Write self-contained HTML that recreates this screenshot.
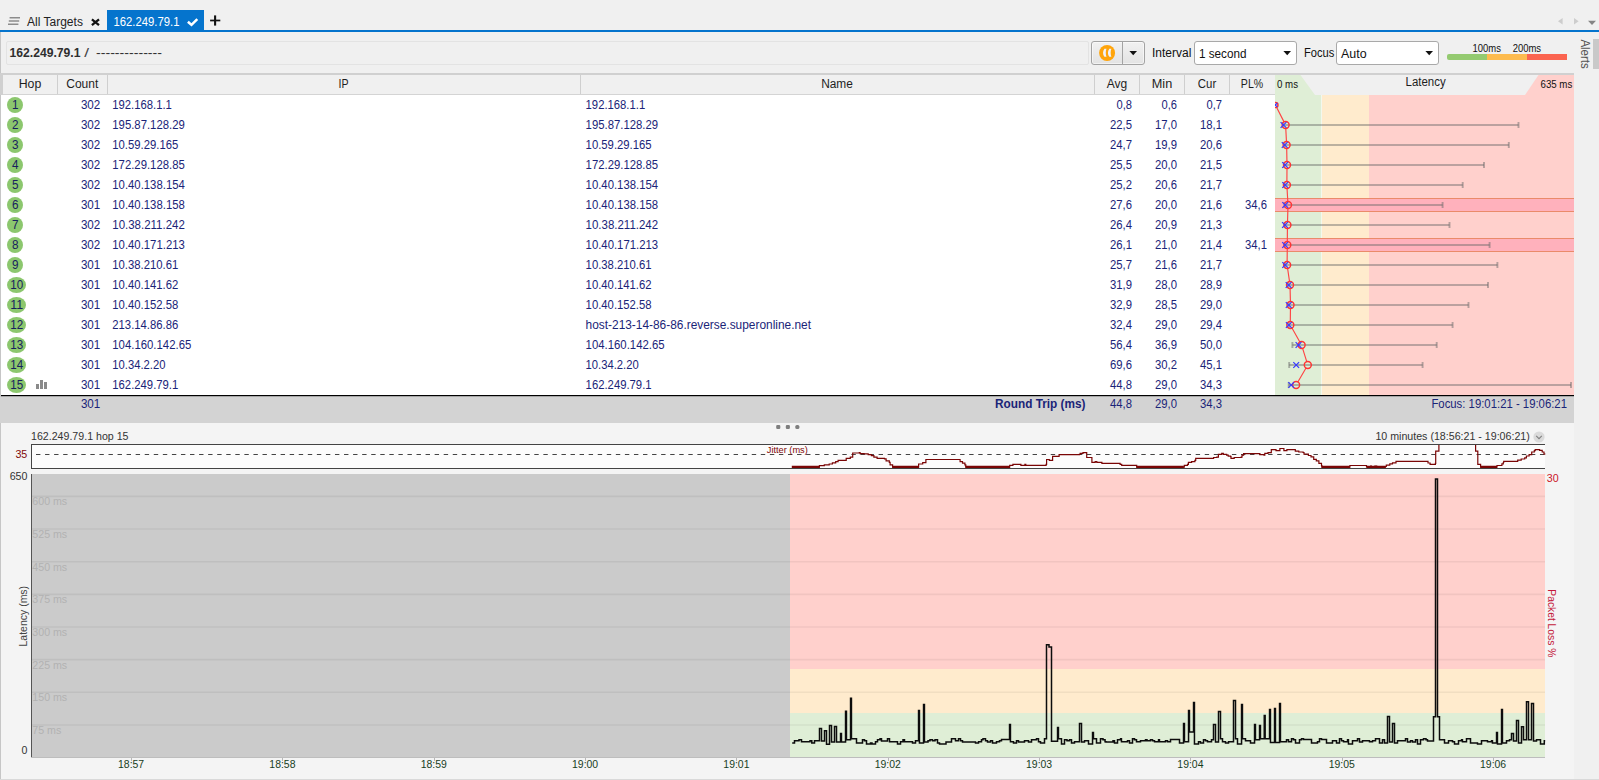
<!DOCTYPE html><html><head><meta charset="utf-8"><title>PingPlotter</title><style>

html,body{margin:0;padding:0;}
body{width:1599px;height:780px;overflow:hidden;background:#f0f0f0;font-family:"Liberation Sans", sans-serif;font-size:12px;color:#222;position:relative;}
.a{position:absolute;}
svg text{font-family:"Liberation Sans", sans-serif;}

</style></head><body>
<div class="a" style="left:0;top:30px;width:1599px;height:2px;background:#0574cd"></div>
<div class="a" style="left:107px;top:10px;width:97px;height:21px;background:#0574cd"></div>
<svg class="a" style="left:7px;top:16px" width="14" height="10"><path d="M2.6 1.8h10.4M1.8 5h10.4M1 8.2h10.4" stroke="#8c8c8c" stroke-width="1.5" fill="none"/></svg>
<svg class="a" style="left:91px;top:18px" width="9" height="9"><path d="M0.9 1.4L8 7.1M8 1.4L0.9 7.1" stroke="#111" stroke-width="2.3" fill="none"/></svg>
<svg class="a" style="left:186px;top:17px" width="13" height="10"><path d="M1.9 4.7L5.5 7.9L11.3 2.1" stroke="#fff" stroke-width="2.5" fill="none"/></svg>
<svg class="a" style="left:209px;top:15px" width="12" height="11"><path d="M6.1 0.4v10.2" stroke="#111" stroke-width="2.1" fill="none"/><path d="M1.1 5.5h10.2" stroke="#111" stroke-width="1.7" fill="none"/></svg>
<svg class="a" style="left:1556px;top:16px" width="43" height="11"><path d="M6.6 2v6.6l-4.6-3.3z" fill="#cdcdcd"/><path d="M18 2v6.6l4.6-3.3z" fill="#cdcdcd"/><path d="M32 4.8h8l-4 4.2z" fill="#858585"/></svg>
<div class="a" style="left:0;top:32px;width:1px;height:748px;background:#c6c6c6"></div>
<div class="a" style="left:0;top:779px;width:1599px;height:1px;background:#d9d9d9"></div>
<div class="a" style="left:6px;top:41px;width:1081px;height:22px;border:1px solid #e3e3e3;border-radius:2px"></div>
<div class="a" style="left:1091px;top:41px;width:52px;height:22px;border:1px solid #a3a3a3;border-radius:3px;background:linear-gradient(#f1f1f1,#e3e3e3);box-shadow:inset 0 0 0 1px rgba(255,255,255,.55)"></div>
<div class="a" style="left:1122px;top:42px;width:1px;height:22px;background:#a3a3a3"></div>
<svg class="a" style="left:1098px;top:44px" width="18" height="18"><circle cx="9.1" cy="9" r="8" fill="#ffa40a"/><path d="M8.5 4.7C7.5 6.5 7.5 11 8.5 12.8L6.4 12.8C4.6 10.6 4.6 6.9 6.4 4.7z" fill="#f1f2fa"/><path d="M13.4 4.7C12.4 6.5 12.4 11 13.4 12.8L11.3 12.8C9.5 10.6 9.5 6.9 11.3 4.7z" fill="#f1f2fa"/></svg>
<svg class="a" style="left:1129px;top:51px" width="9" height="5"><path d="M0.4 0h7.6l-3.8 4.2z" fill="#111"/></svg>
<div class="a" style="left:1194px;top:41px;width:101px;height:22px;border:1px solid #a9a9a9;border-radius:3px;background:#fff"></div>
<svg class="a" style="left:1283px;top:51px" width="9" height="5"><path d="M0.4 0h7.6l-3.8 4.2z" fill="#111"/></svg>
<div class="a" style="left:1336px;top:41px;width:101px;height:22px;border:1px solid #a9a9a9;border-radius:3px;background:#fff"></div>
<svg class="a" style="left:1425px;top:51px" width="9" height="5"><path d="M0.4 0h7.6l-3.8 4.2z" fill="#111"/></svg>
<div class="a" style="left:1447px;top:54px;width:40px;height:6px;background:#94ca70;border-radius:2px 0 0 2px"></div>
<div class="a" style="left:1487px;top:54px;width:40px;height:6px;background:#fdbb4f"></div>
<div class="a" style="left:1527px;top:54px;width:40px;height:6px;background:#fb6450"></div>
<div class="a" style="left:1593px;top:39px;width:6px;height:30px;background:#c9c9c9"></div>
<div class="a" style="left:0px;top:73px;width:1574px;height:2px;background:#d0d0d0"></div>
<div class="a" style="left:0px;top:75px;width:3px;height:20px;background:#d0d0d0"></div>
<div class="a" style="left:3px;top:75px;width:1272px;height:19px;background:#f0f0f0;border-bottom:1px solid #d4d4d4"></div>
<div class="a" style="left:57px;top:75px;width:1px;height:19px;background:#cfcfcf"></div>
<div class="a" style="left:107px;top:75px;width:1px;height:19px;background:#cfcfcf"></div>
<div class="a" style="left:580px;top:75px;width:1px;height:19px;background:#cfcfcf"></div>
<div class="a" style="left:1094px;top:75px;width:1px;height:19px;background:#cfcfcf"></div>
<div class="a" style="left:1139px;top:75px;width:1px;height:19px;background:#cfcfcf"></div>
<div class="a" style="left:1184px;top:75px;width:1px;height:19px;background:#cfcfcf"></div>
<div class="a" style="left:1229px;top:75px;width:1px;height:19px;background:#cfcfcf"></div>
<div class="a" style="left:1px;top:95px;width:1274px;height:300px;background:#fff"></div>
<div class="a" style="left:1275px;top:75px;width:46px;height:320px;background:#dfeed6"></div>
<div class="a" style="left:1321px;top:75px;width:1px;height:320px;background:#f2f8ee"></div>
<div class="a" style="left:1322px;top:75px;width:47px;height:320px;background:#ffebcd"></div>
<div class="a" style="left:1369px;top:75px;width:205px;height:320px;background:#ffd0cc"></div>
<svg class="a" style="left:1275px;top:75px" width="299" height="20"><path d="M25.5 0L263.5 0L250 20L40 20z" fill="#f0f0f0"/></svg>
<div class="a" style="left:1275px;top:198px;width:299px;height:12px;background:#ffb1bc;border-top:1px solid #ea8a6a;border-bottom:1px solid #ea8a6a"></div>
<div class="a" style="left:1275px;top:238px;width:299px;height:12px;background:#ffb1bc;border-top:1px solid #ea8a6a;border-bottom:1px solid #ea8a6a"></div>
<div class="a" style="left:7px;top:97px;width:16px;height:16px;border-radius:50%;background:#8cc76e"></div>
<div class="a" style="left:7px;top:117px;width:16px;height:16px;border-radius:50%;background:#8cc76e"></div>
<div class="a" style="left:7px;top:137px;width:16px;height:16px;border-radius:50%;background:#8cc76e"></div>
<div class="a" style="left:7px;top:157px;width:16px;height:16px;border-radius:50%;background:#8cc76e"></div>
<div class="a" style="left:7px;top:177px;width:16px;height:16px;border-radius:50%;background:#8cc76e"></div>
<div class="a" style="left:7px;top:197px;width:16px;height:16px;border-radius:50%;background:#8cc76e"></div>
<div class="a" style="left:7px;top:217px;width:16px;height:16px;border-radius:50%;background:#8cc76e"></div>
<div class="a" style="left:7px;top:237px;width:16px;height:16px;border-radius:50%;background:#8cc76e"></div>
<div class="a" style="left:7px;top:257px;width:16px;height:16px;border-radius:50%;background:#8cc76e"></div>
<div class="a" style="left:7px;top:277px;width:19px;height:16px;border-radius:50%;background:#8cc76e"></div>
<div class="a" style="left:7px;top:297px;width:19px;height:16px;border-radius:50%;background:#8cc76e"></div>
<div class="a" style="left:7px;top:317px;width:19px;height:16px;border-radius:50%;background:#8cc76e"></div>
<div class="a" style="left:7px;top:337px;width:19px;height:16px;border-radius:50%;background:#8cc76e"></div>
<div class="a" style="left:7px;top:357px;width:19px;height:16px;border-radius:50%;background:#8cc76e"></div>
<div class="a" style="left:7px;top:377px;width:19px;height:16px;border-radius:50%;background:#8cc76e"></div>
<svg class="a" style="left:35px;top:378px" width="13" height="12"><path d="M1 6h3v5h-3zM5 2h3v9h-3zM9 4h3v7h-3z" fill="#8a8a8a"/></svg>
<svg class="a" style="left:1275px;top:95px" width="299" height="300"><path d="M8.0 30 H243.5" stroke="rgba(105,105,105,0.45)" stroke-width="2" fill="none"/><path d="M243.5 27.1 v5.8 M8.0 27.1 v5.8" stroke="rgba(105,105,105,0.5)" stroke-width="1.9" fill="none"/><path d="M9.4 50 H233.8" stroke="rgba(105,105,105,0.45)" stroke-width="2" fill="none"/><path d="M233.8 47.1 v5.8 M9.4 47.1 v5.8" stroke="rgba(105,105,105,0.5)" stroke-width="1.9" fill="none"/><path d="M9.4 70 H209.0" stroke="rgba(105,105,105,0.45)" stroke-width="2" fill="none"/><path d="M209.0 67.1 v5.8 M9.4 67.1 v5.8" stroke="rgba(105,105,105,0.5)" stroke-width="1.9" fill="none"/><path d="M9.7 90 H187.7" stroke="rgba(105,105,105,0.45)" stroke-width="2" fill="none"/><path d="M187.7 87.1 v5.8 M9.7 87.1 v5.8" stroke="rgba(105,105,105,0.5)" stroke-width="1.9" fill="none"/><path d="M9.4 110 H167.6" stroke="rgba(105,105,105,0.45)" stroke-width="2" fill="none"/><path d="M167.6 107.1 v5.8 M9.4 107.1 v5.8" stroke="rgba(105,105,105,0.5)" stroke-width="1.9" fill="none"/><path d="M9.8 130 H174.5" stroke="rgba(105,105,105,0.45)" stroke-width="2" fill="none"/><path d="M174.5 127.1 v5.8 M9.8 127.1 v5.8" stroke="rgba(105,105,105,0.5)" stroke-width="1.9" fill="none"/><path d="M9.9 150 H214.6" stroke="rgba(105,105,105,0.45)" stroke-width="2" fill="none"/><path d="M214.6 147.1 v5.8 M9.9 147.1 v5.8" stroke="rgba(105,105,105,0.5)" stroke-width="1.9" fill="none"/><path d="M10.2 170 H222.4" stroke="rgba(105,105,105,0.45)" stroke-width="2" fill="none"/><path d="M222.4 167.1 v5.8 M10.2 167.1 v5.8" stroke="rgba(105,105,105,0.5)" stroke-width="1.9" fill="none"/><path d="M13.2 190 H213.0" stroke="rgba(105,105,105,0.45)" stroke-width="2" fill="none"/><path d="M213.0 187.1 v5.8 M13.2 187.1 v5.8" stroke="rgba(105,105,105,0.5)" stroke-width="1.9" fill="none"/><path d="M13.4 210 H193.5" stroke="rgba(105,105,105,0.45)" stroke-width="2" fill="none"/><path d="M193.5 207.1 v5.8 M13.4 207.1 v5.8" stroke="rgba(105,105,105,0.5)" stroke-width="1.9" fill="none"/><path d="M13.7 230 H177.6" stroke="rgba(105,105,105,0.45)" stroke-width="2" fill="none"/><path d="M177.6 227.1 v5.8 M13.7 227.1 v5.8" stroke="rgba(105,105,105,0.5)" stroke-width="1.9" fill="none"/><path d="M17.4 250 H161.7" stroke="rgba(105,105,105,0.45)" stroke-width="2" fill="none"/><path d="M161.7 247.1 v5.8 M17.4 247.1 v5.8" stroke="rgba(105,105,105,0.5)" stroke-width="1.9" fill="none"/><path d="M14.2 270 H147.6" stroke="rgba(105,105,105,0.45)" stroke-width="2" fill="none"/><path d="M147.6 267.1 v5.8 M14.2 267.1 v5.8" stroke="rgba(105,105,105,0.5)" stroke-width="1.9" fill="none"/><path d="M13.7 290 H296.0" stroke="rgba(105,105,105,0.45)" stroke-width="2" fill="none"/><path d="M296.0 287.1 v5.8 M13.7 287.1 v5.8" stroke="rgba(105,105,105,0.5)" stroke-width="1.9" fill="none"/><path d="M1.56 12.32L9.00 26.88M10.78 33.50L11.45 46.50M11.70 53.50L11.94 66.50M11.98 73.50L11.89 86.50M12.06 93.49L12.80 106.51M12.90 113.50L12.53 126.50M12.41 133.50L12.32 146.50M12.26 153.50L12.14 166.50M12.61 173.46L14.52 186.54M15.10 193.50L15.41 206.50M15.45 213.50L15.30 226.50M16.98 233.05L24.84 246.95M27.60 253.34L31.74 266.66M31.01 273.02L22.86 286.98" fill="none" stroke="#ff4444" stroke-width="1.15"/><circle cx="0.4" cy="10" r="2.6" fill="none" stroke="#ff3434" stroke-width="1.45"/><path d="M-1.8 7.9l4.2 4.2M-1.8 12.1l4.2 -4.2" stroke="#3a3aff" stroke-width="1.25" fill="none"/><circle cx="10.6" cy="30" r="3.5" fill="none" stroke="#ff3434" stroke-width="1.45"/><path d="M5.6 27.1l5.8 5.8M5.6 32.9l5.8 -5.8" stroke="#3a3aff" stroke-width="1.25" fill="none"/><circle cx="11.6" cy="50" r="3.5" fill="none" stroke="#ff3434" stroke-width="1.45"/><path d="M6.8 47.1l5.8 5.8M6.8 52.9l5.8 -5.8" stroke="#3a3aff" stroke-width="1.25" fill="none"/><circle cx="12.0" cy="70" r="3.5" fill="none" stroke="#ff3434" stroke-width="1.45"/><path d="M7.2 67.1l5.8 5.8M7.2 72.9l5.8 -5.8" stroke="#3a3aff" stroke-width="1.25" fill="none"/><circle cx="11.9" cy="90" r="3.5" fill="none" stroke="#ff3434" stroke-width="1.45"/><path d="M7.3 87.1l5.8 5.8M7.3 92.9l5.8 -5.8" stroke="#3a3aff" stroke-width="1.25" fill="none"/><circle cx="13.0" cy="110" r="3.5" fill="none" stroke="#ff3434" stroke-width="1.45"/><path d="M7.3 107.1l5.8 5.8M7.3 112.9l5.8 -5.8" stroke="#3a3aff" stroke-width="1.25" fill="none"/><circle cx="12.4" cy="130" r="3.5" fill="none" stroke="#ff3434" stroke-width="1.45"/><path d="M7.1 127.1l5.8 5.8M7.1 132.9l5.8 -5.8" stroke="#3a3aff" stroke-width="1.25" fill="none"/><circle cx="12.3" cy="150" r="3.5" fill="none" stroke="#ff3434" stroke-width="1.45"/><path d="M7.2 147.1l5.8 5.8M7.2 152.9l5.8 -5.8" stroke="#3a3aff" stroke-width="1.25" fill="none"/><circle cx="12.1" cy="170" r="3.5" fill="none" stroke="#ff3434" stroke-width="1.45"/><path d="M7.3 167.1l5.8 5.8M7.3 172.9l5.8 -5.8" stroke="#3a3aff" stroke-width="1.25" fill="none"/><circle cx="15.0" cy="190" r="3.5" fill="none" stroke="#ff3434" stroke-width="1.45"/><path d="M10.7 187.1l5.8 5.8M10.7 192.9l5.8 -5.8" stroke="#3a3aff" stroke-width="1.25" fill="none"/><circle cx="15.5" cy="210" r="3.5" fill="none" stroke="#ff3434" stroke-width="1.45"/><path d="M10.8 207.1l5.8 5.8M10.8 212.9l5.8 -5.8" stroke="#3a3aff" stroke-width="1.25" fill="none"/><circle cx="15.3" cy="230" r="3.5" fill="none" stroke="#ff3434" stroke-width="1.45"/><path d="M10.9 227.1l5.8 5.8M10.9 232.9l5.8 -5.8" stroke="#3a3aff" stroke-width="1.25" fill="none"/><circle cx="26.6" cy="250" r="3.5" fill="none" stroke="#ff3434" stroke-width="1.45"/><path d="M20.6 247.1l5.8 5.8M20.6 252.9l5.8 -5.8" stroke="#3a3aff" stroke-width="1.25" fill="none"/><circle cx="32.8" cy="270" r="3.5" fill="none" stroke="#ff3434" stroke-width="1.45"/><path d="M18.3 267.1l5.8 5.8M18.3 272.9l5.8 -5.8" stroke="#3a3aff" stroke-width="1.25" fill="none"/><circle cx="21.1" cy="290" r="3.5" fill="none" stroke="#ff3434" stroke-width="1.45"/><path d="M13.3 287.1l5.8 5.8M13.3 292.9l5.8 -5.8" stroke="#3a3aff" stroke-width="1.25" fill="none"/></svg>
<div class="a" style="left:1px;top:395px;width:1573px;height:1px;background:#000"></div>
<div class="a" style="left:1px;top:396px;width:1573px;height:1px;background:#a6a6a6"></div>
<div class="a" style="left:0px;top:397px;width:1574px;height:26px;background:#d3d3d3"></div>
<div class="a" style="left:1px;top:423px;width:1573px;height:356px;background:#f4f4f4"></div>
<svg class="a" style="left:775px;top:424px" width="26" height="6"><rect x="1.2" y="0.9" width="4.1" height="4.1" rx="1.2" fill="#7e7e7e"/><rect x="10.8" y="0.9" width="4.1" height="4.1" rx="1.2" fill="#7e7e7e"/><rect x="20.3" y="0.9" width="4.1" height="4.1" rx="1.6" fill="#7e7e7e"/></svg>
<svg class="a" style="left:1533px;top:431px" width="12" height="12"><circle cx="6" cy="6" r="5.6" fill="#dadada"/><path d="M3.2 4.8L6 7.6L8.8 4.8" stroke="#808080" stroke-width="1.1" fill="none"/></svg>
<div class="a" style="left:31px;top:444px;width:1513px;height:23px;background:#fcfcfc;border-top:1px solid #444;border-bottom:1px solid #444;border-left:1px solid #444"></div>
<div class="a" style="left:32px;top:474px;width:758px;height:283px;background:#cbcbcb"></div>
<div class="a" style="left:790px;top:474px;width:755px;height:195px;background:#ffd0cc"></div>
<div class="a" style="left:790px;top:669px;width:755px;height:44px;background:#ffebcd"></div>
<div class="a" style="left:790px;top:713px;width:755px;height:44px;background:#dfeed6"></div>
<div class="a" style="left:31px;top:474px;width:1px;height:284px;background:#555"></div>
<div class="a" style="left:31px;top:757px;width:1514px;height:1px;background:#bdbdbd"></div>
<svg class="a" style="left:32px;top:723px" width="1513" height="4"><path d="M0 1.95H1513" stroke="rgba(0,0,0,0.055)" stroke-width="1.6" fill="none"/></svg>
<svg class="a" style="left:32px;top:690px" width="1513" height="4"><path d="M0 2.29H1513" stroke="rgba(0,0,0,0.055)" stroke-width="1.6" fill="none"/></svg>
<svg class="a" style="left:32px;top:658px" width="1513" height="4"><path d="M0 1.64H1513" stroke="rgba(0,0,0,0.055)" stroke-width="1.6" fill="none"/></svg>
<svg class="a" style="left:32px;top:625px" width="1513" height="4"><path d="M0 1.98H1513" stroke="rgba(0,0,0,0.055)" stroke-width="1.6" fill="none"/></svg>
<svg class="a" style="left:32px;top:592px" width="1513" height="4"><path d="M0 2.33H1513" stroke="rgba(0,0,0,0.055)" stroke-width="1.6" fill="none"/></svg>
<svg class="a" style="left:32px;top:560px" width="1513" height="4"><path d="M0 1.68H1513" stroke="rgba(0,0,0,0.055)" stroke-width="1.6" fill="none"/></svg>
<svg class="a" style="left:32px;top:527px" width="1513" height="4"><path d="M0 2.02H1513" stroke="rgba(0,0,0,0.055)" stroke-width="1.6" fill="none"/></svg>
<svg class="a" style="left:32px;top:494px" width="1513" height="4"><path d="M0 2.37H1513" stroke="rgba(0,0,0,0.055)" stroke-width="1.6" fill="none"/></svg>
<div class="a" style="left:131px;top:758px;width:1px;height:3px;background:#b8b8b8"></div>
<div class="a" style="left:282px;top:758px;width:1px;height:3px;background:#b8b8b8"></div>
<div class="a" style="left:434px;top:758px;width:1px;height:3px;background:#b8b8b8"></div>
<div class="a" style="left:585px;top:758px;width:1px;height:3px;background:#b8b8b8"></div>
<div class="a" style="left:736px;top:758px;width:1px;height:3px;background:#b8b8b8"></div>
<div class="a" style="left:888px;top:758px;width:1px;height:3px;background:#b8b8b8"></div>
<div class="a" style="left:1039px;top:758px;width:1px;height:3px;background:#b8b8b8"></div>
<div class="a" style="left:1190px;top:758px;width:1px;height:3px;background:#b8b8b8"></div>
<div class="a" style="left:1342px;top:758px;width:1px;height:3px;background:#b8b8b8"></div>
<div class="a" style="left:1493px;top:758px;width:1px;height:3px;background:#b8b8b8"></div>
<svg class="a" style="left:0;top:445px" width="1599" height="23" viewBox="0 445 1599 23"><path d="M36 454.5H1545" stroke="#444" stroke-width="1.1" stroke-dasharray="4.4 4.66" fill="none"/><path d="M792.1 467.2H819.4V467.2H819.4V465.6H824.3V464.8H829.2V464.0H832.4V462.9H835.7V461.7H838.1V460.4H845.4V460.4H846.2V458.3H850.3V457.2H852.7V453.0H859.3V452.6H860.1V453.6H864.1V453.9H868.2V454.6H871.4V455.6H873.9V457.2H877.1V458.3H884.5V458.8H886.1V460.8H889.3V462.4H890.1V464.8H892.6V467.2H918.6V467.2H918.6V464.0H922.7V462.7H925.9V459.5H957.6V459.5H960.1V461.6H962.5V463.2H964.9V464.8H965.8V467.2H1009.7V467.2H1009.7V465.3H1012.9V464.3H1016.0V464.3H1020.1V464.3H1020.9V465.3H1024.1V465.3H1024.9V464.3H1025.8V465.3H1044.5V465.3H1046.1V464.3H1046.6V459.5H1048.5V459.5H1049.3V460.4H1052.1V460.4H1052.6V456.4H1057.5V456.4H1059.1V454.6H1079.4V454.3H1080.2V453.4H1082.7V453.4H1083.0V452.6H1086.2V452.6H1086.7V457.5H1091.6V457.5H1091.9V462.4H1094.9V462.4H1095.2V461.6H1096.5V461.6H1096.8V462.4H1101.4V462.4H1101.9V463.4H1119.3V463.4H1120.1V464.3H1121.7V465.3H1136.3V465.3H1136.7V467.2H1183.5V467.2H1184.3V465.3H1187.5V464.3H1188.4V462.4H1191.6V461.6H1194.9V460.4H1195.7V458.3H1212.7V458.3H1213.6V457.5H1216.8V457.2H1218.4V454.3H1221.7V453.4H1223.3V454.3H1226.6V455.1H1228.2V456.2H1230.6V456.7H1231.0V458.3H1233.9V458.3H1234.2V457.5H1241.2V457.2H1242.0V455.1H1243.6V453.6H1258.3V453.6H1259.9V454.7H1264.0V455.1H1264.8V453.4H1268.0V452.6H1271.3V449.7H1276.0V449.7H1276.0V450.6H1279.5V450.6H1279.9V448.5H1283.0V448.5H1283.9V450.6H1286.5V450.6H1286.9V449.6H1293.5V449.6H1295.3V451.1H1298.8V452.0H1303.1V452.5H1304.0V454.1H1308.4V455.5H1311.0V456.9H1313.7V459.4H1316.3V460.8H1318.9V463.4H1321.5V465.7H1321.9V467.2H1349.6V467.2H1349.9V465.5H1366.2V465.5H1366.5V466.9H1370.6V466.0H1371.4V466.9H1374.9V466.0H1376.7V466.9H1385.5V466.5H1386.3V465.1H1389.8V463.9H1392.5V462.9H1396.0V461.3H1427.5V461.3H1428.0V463.0H1430.1V464.3H1432.7V464.3H1435.4V463.4H1435.7V451.1H1438.5V451.1H1438.9V443.3H1475.3V443.3H1475.6V451.1H1477.4V451.1H1477.8V464.3H1480.0V464.3H1480.6V467.2H1496.7V467.2H1497.0V465.5H1501.0V465.5H1501.9V463.9H1503.3V462.5H1503.7V461.3H1515.9V461.3H1517.7V460.2H1521.2V459.0H1524.7V457.8H1526.4V456.0H1529.1V454.6H1531.7V452.0H1534.3V450.6H1535.2V449.6H1539.6V450.3H1542.2V452.0H1544.0V454.1H1544.8V454.6" stroke="#7a0505" stroke-width="1.2" fill="none"/><path d="M791.8 466.9H819.7M892.3 466.9H918.9M965.5 466.9H1010.0M1136.4 466.9H1183.8M1321.6 466.9H1349.9M1480.3 466.9H1497.0M1366.5 466.9H1385.8" stroke="#7a0505" stroke-width="2.3" fill="none"/></svg><svg class="a" style="left:0;top:474px" width="1599" height="284" viewBox="0 474 1599 284"><path d="M792.20 743.00H794.50V740.70H799.00V739.70H801.50V741.70H810.00V740.70H811.80V743.00H814.50V740.80H819.50V728.50H821.50V741.00H824.50V730.70H826.50V744.30H829.50V725.50H831.50V742.00H834.50V726.50H836.50V742.00H840.55V733.50H841.45V742.00H845.55V711.20H846.45V739.70H850.55V698.30H851.45V738.70H856.50V743.00H862.50V739.70H864.50V740.70H866.50V744.00H870.50V743.00H872.00V744.00H875.50V741.80H877.50V739.70H880.00V738.70H881.50V741.00H887.50V738.70H889.50V741.80H897.50V744.00H900.50V741.80H903.00V739.70H904.50V741.80H912.50V743.00H915.50V740.80H918.55V710.50H919.45V743.00H923.55V704.50H924.45V742.00H928.00V740.80H930.00V739.70H932.50V740.80H935.00V739.70H937.50V743.00H939.50V744.00H946.00V742.00H951.50V738.70H955.50V740.80H958.50V738.70H960.50V740.80H962.50V742.00H975.50V743.00H978.50V741.80H981.50V739.70H983.00V738.70H985.50V740.80H987.50V742.00H990.50V740.80H992.50V743.00H996.50V741.80H999.50V740.80H1001.50V739.50H1009.55V724.50H1010.45V741.80H1013.50V743.00H1016.50V740.80H1018.50V742.00H1024.50V740.80H1028.50V742.00H1031.50V739.70H1036.50V738.70H1038.50V741.80H1040.50V743.00H1044.50V738.70H1046.50V644.80H1049.00V647.00H1051.50V741.20H1057.55V727.50H1058.45V738.70H1061.50V744.00H1064.50V739.70H1067.00V740.80H1069.50V739.70H1071.50V743.00H1074.50V741.80H1079.50V723.50H1081.50V742.00H1084.50V740.80H1088.50V744.00H1092.55V732.50H1093.45V738.70H1096.50V743.00H1100.50V738.70H1103.00V739.70H1105.05V741.80H1105.95V742.00H1113.00V740.80H1114.50V743.00H1117.50V739.70H1120.55V738.70H1121.45V741.80H1127.50V740.80H1129.50V743.00H1132.50V738.70H1134.50V739.70H1136.50V741.80H1140.50V740.80H1145.50V739.70H1147.00V740.80H1150.50V739.70H1152.50V740.80H1154.50V741.80H1158.55V739.70H1159.45V741.80H1165.50V740.80H1167.50V741.80H1170.50V739.50H1179.50V743.00H1183.55V723.50H1184.45V741.80H1188.55V710.50H1189.45V732.00H1193.55V702.50H1194.45V744.00H1198.50V741.80H1200.50V743.00H1203.50V739.70H1205.50V740.80H1207.50V741.80H1211.50V739.70H1213.50V724.50H1215.50V742.00H1218.50V711.50H1220.50V738.70H1222.50V741.80H1225.50V743.00H1228.50V741.80H1233.50V700.50H1235.50V738.70H1237.50V744.00H1241.55V704.50H1242.45V738.70H1245.50V740.80H1250.50V743.00H1254.55V724.50H1255.45V739.70H1259.55V725.50H1260.45V738.70H1264.25V715.50H1265.15V738.70H1266.05V738.70H1269.55V709.50H1270.45V742.50H1274.55V708.50H1275.45V742.50H1279.55V703.50H1280.45V741.80H1286.50V739.70H1288.50V741.80H1291.50V738.70H1293.50V739.70H1295.50V743.00H1299.50V739.70H1301.50V738.70H1303.50V739.50H1311.50V743.00H1317.50V741.80H1319.50V738.70H1321.50V739.50H1326.50V743.00H1332.50V740.80H1336.50V743.00H1339.50V738.70H1341.50V740.80H1343.50V741.80H1347.55V739.70H1348.45V744.00H1352.50V740.80H1357.50V738.70H1359.50V742.00H1362.50V740.80H1369.50V741.80H1372.50V740.80H1375.50V738.70H1379.50V743.00H1382.50V739.70H1384.50V743.00H1387.50V716.50H1389.50V742.00H1392.50V723.50H1394.50V743.00H1397.50V740.80H1405.50V738.70H1407.50V742.00H1410.50V740.80H1412.50V742.00H1415.50V739.70H1417.50V744.00H1420.50V739.70H1423.50V738.70H1426.00V739.70H1427.50V741.00H1433.50V716.80H1435.50V479.00H1437.50V716.80H1439.50V739.70H1444.50V743.00H1448.50V740.80H1452.50V741.80H1454.50V744.00H1458.50V740.80H1461.55V739.70H1462.45V741.80H1466.50V738.70H1470.50V743.00H1477.50V744.00H1481.50V740.80H1487.50V741.80H1491.55V740.80H1492.45V743.00H1496.55V732.50H1497.45V744.00H1501.55V709.50H1502.45V743.00H1506.50V740.80H1509.50V739.70H1511.50V733.50H1513.50V741.00H1516.50V720.50H1518.50V743.00H1521.50V726.80H1523.50V739.70H1526.50V701.80H1528.50V739.70H1531.50V703.50H1533.50V741.00H1536.50V739.70H1540.50V744.00H1544.30V740.80H1545.20" stroke="#0c0c0c" stroke-width="1.5" fill="none" stroke-linejoin="miter"/></svg>
<svg class="a" style="left:0;top:0;pointer-events:none" width="1599" height="780"><text x="27.0" y="25.6" font-size="12" fill="#222" text-anchor="start" textLength="55.9" lengthAdjust="spacingAndGlyphs">All Targets</text><text x="113.5" y="25.6" font-size="12" fill="#fff" text-anchor="start" textLength="66.0" lengthAdjust="spacingAndGlyphs">162.249.79.1</text><text x="9.5" y="56.6" font-size="12" fill="#2e2e2e" text-anchor="start" font-weight="bold" textLength="71.0" lengthAdjust="spacingAndGlyphs">162.249.79.1</text><text x="84.2" y="56.6" font-size="12" fill="#444" text-anchor="start" textLength="4.8" lengthAdjust="spacingAndGlyphs">/</text><text x="96.0" y="56.6" font-size="12" fill="#333" text-anchor="start" textLength="66.0" lengthAdjust="spacingAndGlyphs">--------------</text><text x="1152.0" y="57.0" font-size="12" fill="#111" text-anchor="start" textLength="39.3" lengthAdjust="spacingAndGlyphs">Interval</text><text x="1199.0" y="57.8" font-size="12" fill="#111" text-anchor="start" textLength="47.5" lengthAdjust="spacingAndGlyphs">1 second</text><text x="1304.0" y="57.0" font-size="12" fill="#111" text-anchor="start" textLength="30.3" lengthAdjust="spacingAndGlyphs">Focus</text><text x="1341.0" y="57.8" font-size="12" fill="#111" text-anchor="start" textLength="25.6" lengthAdjust="spacingAndGlyphs">Auto</text><text x="1472.5" y="51.8" font-size="10.4" fill="#111" text-anchor="start" textLength="28.4" lengthAdjust="spacingAndGlyphs">100ms</text><text x="1512.7" y="51.8" font-size="10.4" fill="#111" text-anchor="start" textLength="28.4" lengthAdjust="spacingAndGlyphs">200ms</text><text transform="translate(1580.6,39.4) rotate(90)" font-size="12" fill="#555" textLength="29.4" lengthAdjust="spacingAndGlyphs">Alerts</text><text x="30.0" y="87.6" font-size="12" fill="#1e1e1e" text-anchor="middle" textLength="22.6" lengthAdjust="spacingAndGlyphs">Hop</text><text x="82.3" y="87.6" font-size="12" fill="#1e1e1e" text-anchor="middle" textLength="32.1" lengthAdjust="spacingAndGlyphs">Count</text><text x="343.5" y="87.6" font-size="12" fill="#1e1e1e" text-anchor="middle" textLength="10.0" lengthAdjust="spacingAndGlyphs">IP</text><text x="837.0" y="87.6" font-size="12" fill="#1e1e1e" text-anchor="middle" textLength="31.7" lengthAdjust="spacingAndGlyphs">Name</text><text x="1117.0" y="87.6" font-size="12" fill="#1e1e1e" text-anchor="middle" textLength="20.5" lengthAdjust="spacingAndGlyphs">Avg</text><text x="1162.0" y="87.6" font-size="12" fill="#1e1e1e" text-anchor="middle" textLength="20.5" lengthAdjust="spacingAndGlyphs">Min</text><text x="1207.0" y="87.6" font-size="12" fill="#1e1e1e" text-anchor="middle" textLength="18.4" lengthAdjust="spacingAndGlyphs">Cur</text><text x="1252.0" y="87.6" font-size="12" fill="#1e1e1e" text-anchor="middle" textLength="22.3" lengthAdjust="spacingAndGlyphs">PL%</text><text x="1277.0" y="87.6" font-size="10" fill="#111" text-anchor="start" textLength="21.0" lengthAdjust="spacingAndGlyphs">0 ms</text><text x="1405.5" y="86.4" font-size="12" fill="#1e1e1e" text-anchor="start" textLength="40.2" lengthAdjust="spacingAndGlyphs">Latency</text><text x="1572.3" y="87.7" font-size="10" fill="#111" text-anchor="end" textLength="31.8" lengthAdjust="spacingAndGlyphs">635 ms</text><text x="15.2" y="109.2" font-size="12" fill="#17205e" text-anchor="middle" textLength="6.5" lengthAdjust="spacingAndGlyphs">1</text><text x="100.3" y="109.1" font-size="12" fill="#1a2478" text-anchor="end" textLength="19.4" lengthAdjust="spacingAndGlyphs">302</text><text x="112.3" y="109.1" font-size="12" fill="#1a2478" text-anchor="start" textLength="59.6" lengthAdjust="spacingAndGlyphs">192.168.1.1</text><text x="585.6" y="109.1" font-size="12" fill="#1a2478" text-anchor="start" textLength="59.6" lengthAdjust="spacingAndGlyphs">192.168.1.1</text><text x="1132.0" y="109.1" font-size="12" fill="#1a2478" text-anchor="end" textLength="15.5" lengthAdjust="spacingAndGlyphs">0,8</text><text x="1177.0" y="109.1" font-size="12" fill="#1a2478" text-anchor="end" textLength="15.5" lengthAdjust="spacingAndGlyphs">0,6</text><text x="1222.0" y="109.1" font-size="12" fill="#1a2478" text-anchor="end" textLength="15.5" lengthAdjust="spacingAndGlyphs">0,7</text><text x="15.2" y="129.2" font-size="12" fill="#17205e" text-anchor="middle" textLength="6.5" lengthAdjust="spacingAndGlyphs">2</text><text x="100.3" y="129.1" font-size="12" fill="#1a2478" text-anchor="end" textLength="19.4" lengthAdjust="spacingAndGlyphs">302</text><text x="112.3" y="129.1" font-size="12" fill="#1a2478" text-anchor="start" textLength="72.5" lengthAdjust="spacingAndGlyphs">195.87.128.29</text><text x="585.6" y="129.1" font-size="12" fill="#1a2478" text-anchor="start" textLength="72.5" lengthAdjust="spacingAndGlyphs">195.87.128.29</text><text x="1132.0" y="129.1" font-size="12" fill="#1a2478" text-anchor="end" textLength="22.0" lengthAdjust="spacingAndGlyphs">22,5</text><text x="1177.0" y="129.1" font-size="12" fill="#1a2478" text-anchor="end" textLength="22.0" lengthAdjust="spacingAndGlyphs">17,0</text><text x="1222.0" y="129.1" font-size="12" fill="#1a2478" text-anchor="end" textLength="22.0" lengthAdjust="spacingAndGlyphs">18,1</text><text x="15.2" y="149.2" font-size="12" fill="#17205e" text-anchor="middle" textLength="6.5" lengthAdjust="spacingAndGlyphs">3</text><text x="100.3" y="149.1" font-size="12" fill="#1a2478" text-anchor="end" textLength="19.4" lengthAdjust="spacingAndGlyphs">302</text><text x="112.3" y="149.1" font-size="12" fill="#1a2478" text-anchor="start" textLength="66.0" lengthAdjust="spacingAndGlyphs">10.59.29.165</text><text x="585.6" y="149.1" font-size="12" fill="#1a2478" text-anchor="start" textLength="66.0" lengthAdjust="spacingAndGlyphs">10.59.29.165</text><text x="1132.0" y="149.1" font-size="12" fill="#1a2478" text-anchor="end" textLength="22.0" lengthAdjust="spacingAndGlyphs">24,7</text><text x="1177.0" y="149.1" font-size="12" fill="#1a2478" text-anchor="end" textLength="22.0" lengthAdjust="spacingAndGlyphs">19,9</text><text x="1222.0" y="149.1" font-size="12" fill="#1a2478" text-anchor="end" textLength="22.0" lengthAdjust="spacingAndGlyphs">20,6</text><text x="15.2" y="169.2" font-size="12" fill="#17205e" text-anchor="middle" textLength="6.5" lengthAdjust="spacingAndGlyphs">4</text><text x="100.3" y="169.1" font-size="12" fill="#1a2478" text-anchor="end" textLength="19.4" lengthAdjust="spacingAndGlyphs">302</text><text x="112.3" y="169.1" font-size="12" fill="#1a2478" text-anchor="start" textLength="72.5" lengthAdjust="spacingAndGlyphs">172.29.128.85</text><text x="585.6" y="169.1" font-size="12" fill="#1a2478" text-anchor="start" textLength="72.5" lengthAdjust="spacingAndGlyphs">172.29.128.85</text><text x="1132.0" y="169.1" font-size="12" fill="#1a2478" text-anchor="end" textLength="22.0" lengthAdjust="spacingAndGlyphs">25,5</text><text x="1177.0" y="169.1" font-size="12" fill="#1a2478" text-anchor="end" textLength="22.0" lengthAdjust="spacingAndGlyphs">20,0</text><text x="1222.0" y="169.1" font-size="12" fill="#1a2478" text-anchor="end" textLength="22.0" lengthAdjust="spacingAndGlyphs">21,5</text><text x="15.2" y="189.2" font-size="12" fill="#17205e" text-anchor="middle" textLength="6.5" lengthAdjust="spacingAndGlyphs">5</text><text x="100.3" y="189.1" font-size="12" fill="#1a2478" text-anchor="end" textLength="19.4" lengthAdjust="spacingAndGlyphs">302</text><text x="112.3" y="189.1" font-size="12" fill="#1a2478" text-anchor="start" textLength="72.5" lengthAdjust="spacingAndGlyphs">10.40.138.154</text><text x="585.6" y="189.1" font-size="12" fill="#1a2478" text-anchor="start" textLength="72.5" lengthAdjust="spacingAndGlyphs">10.40.138.154</text><text x="1132.0" y="189.1" font-size="12" fill="#1a2478" text-anchor="end" textLength="22.0" lengthAdjust="spacingAndGlyphs">25,2</text><text x="1177.0" y="189.1" font-size="12" fill="#1a2478" text-anchor="end" textLength="22.0" lengthAdjust="spacingAndGlyphs">20,6</text><text x="1222.0" y="189.1" font-size="12" fill="#1a2478" text-anchor="end" textLength="22.0" lengthAdjust="spacingAndGlyphs">21,7</text><text x="15.2" y="209.2" font-size="12" fill="#17205e" text-anchor="middle" textLength="6.5" lengthAdjust="spacingAndGlyphs">6</text><text x="100.3" y="209.1" font-size="12" fill="#1a2478" text-anchor="end" textLength="19.4" lengthAdjust="spacingAndGlyphs">301</text><text x="112.3" y="209.1" font-size="12" fill="#1a2478" text-anchor="start" textLength="72.5" lengthAdjust="spacingAndGlyphs">10.40.138.158</text><text x="585.6" y="209.1" font-size="12" fill="#1a2478" text-anchor="start" textLength="72.5" lengthAdjust="spacingAndGlyphs">10.40.138.158</text><text x="1132.0" y="209.1" font-size="12" fill="#1a2478" text-anchor="end" textLength="22.0" lengthAdjust="spacingAndGlyphs">27,6</text><text x="1177.0" y="209.1" font-size="12" fill="#1a2478" text-anchor="end" textLength="22.0" lengthAdjust="spacingAndGlyphs">20,0</text><text x="1222.0" y="209.1" font-size="12" fill="#1a2478" text-anchor="end" textLength="22.0" lengthAdjust="spacingAndGlyphs">21,6</text><text x="1267.0" y="209.1" font-size="12" fill="#1a2478" text-anchor="end" textLength="22.0" lengthAdjust="spacingAndGlyphs">34,6</text><text x="15.2" y="229.2" font-size="12" fill="#17205e" text-anchor="middle" textLength="6.5" lengthAdjust="spacingAndGlyphs">7</text><text x="100.3" y="229.1" font-size="12" fill="#1a2478" text-anchor="end" textLength="19.4" lengthAdjust="spacingAndGlyphs">302</text><text x="112.3" y="229.1" font-size="12" fill="#1a2478" text-anchor="start" textLength="72.5" lengthAdjust="spacingAndGlyphs">10.38.211.242</text><text x="585.6" y="229.1" font-size="12" fill="#1a2478" text-anchor="start" textLength="72.5" lengthAdjust="spacingAndGlyphs">10.38.211.242</text><text x="1132.0" y="229.1" font-size="12" fill="#1a2478" text-anchor="end" textLength="22.0" lengthAdjust="spacingAndGlyphs">26,4</text><text x="1177.0" y="229.1" font-size="12" fill="#1a2478" text-anchor="end" textLength="22.0" lengthAdjust="spacingAndGlyphs">20,9</text><text x="1222.0" y="229.1" font-size="12" fill="#1a2478" text-anchor="end" textLength="22.0" lengthAdjust="spacingAndGlyphs">21,3</text><text x="15.2" y="249.2" font-size="12" fill="#17205e" text-anchor="middle" textLength="6.5" lengthAdjust="spacingAndGlyphs">8</text><text x="100.3" y="249.1" font-size="12" fill="#1a2478" text-anchor="end" textLength="19.4" lengthAdjust="spacingAndGlyphs">302</text><text x="112.3" y="249.1" font-size="12" fill="#1a2478" text-anchor="start" textLength="72.5" lengthAdjust="spacingAndGlyphs">10.40.171.213</text><text x="585.6" y="249.1" font-size="12" fill="#1a2478" text-anchor="start" textLength="72.5" lengthAdjust="spacingAndGlyphs">10.40.171.213</text><text x="1132.0" y="249.1" font-size="12" fill="#1a2478" text-anchor="end" textLength="22.0" lengthAdjust="spacingAndGlyphs">26,1</text><text x="1177.0" y="249.1" font-size="12" fill="#1a2478" text-anchor="end" textLength="22.0" lengthAdjust="spacingAndGlyphs">21,0</text><text x="1222.0" y="249.1" font-size="12" fill="#1a2478" text-anchor="end" textLength="22.0" lengthAdjust="spacingAndGlyphs">21,4</text><text x="1267.0" y="249.1" font-size="12" fill="#1a2478" text-anchor="end" textLength="22.0" lengthAdjust="spacingAndGlyphs">34,1</text><text x="15.2" y="269.2" font-size="12" fill="#17205e" text-anchor="middle" textLength="6.5" lengthAdjust="spacingAndGlyphs">9</text><text x="100.3" y="269.1" font-size="12" fill="#1a2478" text-anchor="end" textLength="19.4" lengthAdjust="spacingAndGlyphs">301</text><text x="112.3" y="269.1" font-size="12" fill="#1a2478" text-anchor="start" textLength="66.0" lengthAdjust="spacingAndGlyphs">10.38.210.61</text><text x="585.6" y="269.1" font-size="12" fill="#1a2478" text-anchor="start" textLength="66.0" lengthAdjust="spacingAndGlyphs">10.38.210.61</text><text x="1132.0" y="269.1" font-size="12" fill="#1a2478" text-anchor="end" textLength="22.0" lengthAdjust="spacingAndGlyphs">25,7</text><text x="1177.0" y="269.1" font-size="12" fill="#1a2478" text-anchor="end" textLength="22.0" lengthAdjust="spacingAndGlyphs">21,6</text><text x="1222.0" y="269.1" font-size="12" fill="#1a2478" text-anchor="end" textLength="22.0" lengthAdjust="spacingAndGlyphs">21,7</text><text x="16.8" y="289.2" font-size="12" fill="#17205e" text-anchor="middle" textLength="12.9" lengthAdjust="spacingAndGlyphs">10</text><text x="100.3" y="289.1" font-size="12" fill="#1a2478" text-anchor="end" textLength="19.4" lengthAdjust="spacingAndGlyphs">301</text><text x="112.3" y="289.1" font-size="12" fill="#1a2478" text-anchor="start" textLength="66.0" lengthAdjust="spacingAndGlyphs">10.40.141.62</text><text x="585.6" y="289.1" font-size="12" fill="#1a2478" text-anchor="start" textLength="66.0" lengthAdjust="spacingAndGlyphs">10.40.141.62</text><text x="1132.0" y="289.1" font-size="12" fill="#1a2478" text-anchor="end" textLength="22.0" lengthAdjust="spacingAndGlyphs">31,9</text><text x="1177.0" y="289.1" font-size="12" fill="#1a2478" text-anchor="end" textLength="22.0" lengthAdjust="spacingAndGlyphs">28,0</text><text x="1222.0" y="289.1" font-size="12" fill="#1a2478" text-anchor="end" textLength="22.0" lengthAdjust="spacingAndGlyphs">28,9</text><text x="16.8" y="309.2" font-size="12" fill="#17205e" text-anchor="middle" textLength="12.9" lengthAdjust="spacingAndGlyphs">11</text><text x="100.3" y="309.1" font-size="12" fill="#1a2478" text-anchor="end" textLength="19.4" lengthAdjust="spacingAndGlyphs">301</text><text x="112.3" y="309.1" font-size="12" fill="#1a2478" text-anchor="start" textLength="66.0" lengthAdjust="spacingAndGlyphs">10.40.152.58</text><text x="585.6" y="309.1" font-size="12" fill="#1a2478" text-anchor="start" textLength="66.0" lengthAdjust="spacingAndGlyphs">10.40.152.58</text><text x="1132.0" y="309.1" font-size="12" fill="#1a2478" text-anchor="end" textLength="22.0" lengthAdjust="spacingAndGlyphs">32,9</text><text x="1177.0" y="309.1" font-size="12" fill="#1a2478" text-anchor="end" textLength="22.0" lengthAdjust="spacingAndGlyphs">28,5</text><text x="1222.0" y="309.1" font-size="12" fill="#1a2478" text-anchor="end" textLength="22.0" lengthAdjust="spacingAndGlyphs">29,0</text><text x="16.8" y="329.2" font-size="12" fill="#17205e" text-anchor="middle" textLength="12.9" lengthAdjust="spacingAndGlyphs">12</text><text x="100.3" y="329.1" font-size="12" fill="#1a2478" text-anchor="end" textLength="19.4" lengthAdjust="spacingAndGlyphs">301</text><text x="112.3" y="329.1" font-size="12" fill="#1a2478" text-anchor="start" textLength="66.0" lengthAdjust="spacingAndGlyphs">213.14.86.86</text><text x="585.6" y="329.1" font-size="12" fill="#1a2478" text-anchor="start" textLength="225.4" lengthAdjust="spacingAndGlyphs">host-213-14-86-86.reverse.superonline.net</text><text x="1132.0" y="329.1" font-size="12" fill="#1a2478" text-anchor="end" textLength="22.0" lengthAdjust="spacingAndGlyphs">32,4</text><text x="1177.0" y="329.1" font-size="12" fill="#1a2478" text-anchor="end" textLength="22.0" lengthAdjust="spacingAndGlyphs">29,0</text><text x="1222.0" y="329.1" font-size="12" fill="#1a2478" text-anchor="end" textLength="22.0" lengthAdjust="spacingAndGlyphs">29,4</text><text x="16.8" y="349.2" font-size="12" fill="#17205e" text-anchor="middle" textLength="12.9" lengthAdjust="spacingAndGlyphs">13</text><text x="100.3" y="349.1" font-size="12" fill="#1a2478" text-anchor="end" textLength="19.4" lengthAdjust="spacingAndGlyphs">301</text><text x="112.3" y="349.1" font-size="12" fill="#1a2478" text-anchor="start" textLength="79.0" lengthAdjust="spacingAndGlyphs">104.160.142.65</text><text x="585.6" y="349.1" font-size="12" fill="#1a2478" text-anchor="start" textLength="79.0" lengthAdjust="spacingAndGlyphs">104.160.142.65</text><text x="1132.0" y="349.1" font-size="12" fill="#1a2478" text-anchor="end" textLength="22.0" lengthAdjust="spacingAndGlyphs">56,4</text><text x="1177.0" y="349.1" font-size="12" fill="#1a2478" text-anchor="end" textLength="22.0" lengthAdjust="spacingAndGlyphs">36,9</text><text x="1222.0" y="349.1" font-size="12" fill="#1a2478" text-anchor="end" textLength="22.0" lengthAdjust="spacingAndGlyphs">50,0</text><text x="16.8" y="369.2" font-size="12" fill="#17205e" text-anchor="middle" textLength="12.9" lengthAdjust="spacingAndGlyphs">14</text><text x="100.3" y="369.1" font-size="12" fill="#1a2478" text-anchor="end" textLength="19.4" lengthAdjust="spacingAndGlyphs">301</text><text x="112.3" y="369.1" font-size="12" fill="#1a2478" text-anchor="start" textLength="53.1" lengthAdjust="spacingAndGlyphs">10.34.2.20</text><text x="585.6" y="369.1" font-size="12" fill="#1a2478" text-anchor="start" textLength="53.1" lengthAdjust="spacingAndGlyphs">10.34.2.20</text><text x="1132.0" y="369.1" font-size="12" fill="#1a2478" text-anchor="end" textLength="22.0" lengthAdjust="spacingAndGlyphs">69,6</text><text x="1177.0" y="369.1" font-size="12" fill="#1a2478" text-anchor="end" textLength="22.0" lengthAdjust="spacingAndGlyphs">30,2</text><text x="1222.0" y="369.1" font-size="12" fill="#1a2478" text-anchor="end" textLength="22.0" lengthAdjust="spacingAndGlyphs">45,1</text><text x="16.8" y="389.2" font-size="12" fill="#17205e" text-anchor="middle" textLength="12.9" lengthAdjust="spacingAndGlyphs">15</text><text x="100.3" y="389.1" font-size="12" fill="#1a2478" text-anchor="end" textLength="19.4" lengthAdjust="spacingAndGlyphs">301</text><text x="112.3" y="389.1" font-size="12" fill="#1a2478" text-anchor="start" textLength="66.0" lengthAdjust="spacingAndGlyphs">162.249.79.1</text><text x="585.6" y="389.1" font-size="12" fill="#1a2478" text-anchor="start" textLength="66.0" lengthAdjust="spacingAndGlyphs">162.249.79.1</text><text x="1132.0" y="389.1" font-size="12" fill="#1a2478" text-anchor="end" textLength="22.0" lengthAdjust="spacingAndGlyphs">44,8</text><text x="1177.0" y="389.1" font-size="12" fill="#1a2478" text-anchor="end" textLength="22.0" lengthAdjust="spacingAndGlyphs">29,0</text><text x="1222.0" y="389.1" font-size="12" fill="#1a2478" text-anchor="end" textLength="22.0" lengthAdjust="spacingAndGlyphs">34,3</text><text x="100.3" y="407.6" font-size="12" fill="#1a2478" text-anchor="end" textLength="19.4" lengthAdjust="spacingAndGlyphs">301</text><text x="1085.5" y="407.8" font-size="12" fill="#1a2478" text-anchor="end" font-weight="bold" textLength="90.5" lengthAdjust="spacingAndGlyphs">Round Trip (ms)</text><text x="1132.0" y="407.6" font-size="12" fill="#1a2478" text-anchor="end" textLength="22.0" lengthAdjust="spacingAndGlyphs">44,8</text><text x="1177.0" y="407.6" font-size="12" fill="#1a2478" text-anchor="end" textLength="22.0" lengthAdjust="spacingAndGlyphs">29,0</text><text x="1222.0" y="407.6" font-size="12" fill="#1a2478" text-anchor="end" textLength="22.0" lengthAdjust="spacingAndGlyphs">34,3</text><text x="1567.0" y="407.6" font-size="12" fill="#1a2478" text-anchor="end" textLength="135.6" lengthAdjust="spacingAndGlyphs">Focus: 19:01:21 - 19:06:21</text><text x="31.0" y="440.0" font-size="11" fill="#333" text-anchor="start" textLength="97.5" lengthAdjust="spacingAndGlyphs">162.249.79.1 hop 15</text><text x="1529.8" y="440.3" font-size="11" fill="#333" text-anchor="end" textLength="154.4" lengthAdjust="spacingAndGlyphs">10 minutes (18:56:21 - 19:06:21)</text><text x="27.3" y="457.7" font-size="11" fill="#820808" text-anchor="end" textLength="11.9" lengthAdjust="spacingAndGlyphs">35</text><text x="27.5" y="479.6" font-size="11" fill="#333" text-anchor="end" textLength="17.8" lengthAdjust="spacingAndGlyphs">650</text><text x="27.5" y="753.6" font-size="11" fill="#333" text-anchor="end" textLength="5.9" lengthAdjust="spacingAndGlyphs">0</text><text x="1546.8" y="481.6" font-size="11" fill="#cc1428" text-anchor="start" textLength="11.9" lengthAdjust="spacingAndGlyphs">30</text><text x="32.3" y="733.8" font-size="11" fill="#b2b2b2" text-anchor="start" textLength="29.0" lengthAdjust="spacingAndGlyphs">75 ms</text><text x="32.3" y="700.8" font-size="11" fill="#b2b2b2" text-anchor="start" textLength="34.9" lengthAdjust="spacingAndGlyphs">150 ms</text><text x="32.3" y="668.8" font-size="11" fill="#b2b2b2" text-anchor="start" textLength="34.9" lengthAdjust="spacingAndGlyphs">225 ms</text><text x="32.3" y="635.8" font-size="11" fill="#b2b2b2" text-anchor="start" textLength="34.9" lengthAdjust="spacingAndGlyphs">300 ms</text><text x="32.3" y="602.8" font-size="11" fill="#b2b2b2" text-anchor="start" textLength="34.9" lengthAdjust="spacingAndGlyphs">375 ms</text><text x="32.3" y="570.8" font-size="11" fill="#b2b2b2" text-anchor="start" textLength="34.9" lengthAdjust="spacingAndGlyphs">450 ms</text><text x="32.3" y="537.8" font-size="11" fill="#b2b2b2" text-anchor="start" textLength="34.9" lengthAdjust="spacingAndGlyphs">525 ms</text><text x="32.3" y="504.8" font-size="11" fill="#b2b2b2" text-anchor="start" textLength="34.9" lengthAdjust="spacingAndGlyphs">600 ms</text><text x="131.1" y="767.7" font-size="11" fill="#173d1c" text-anchor="middle" textLength="26.1" lengthAdjust="spacingAndGlyphs">18:57</text><text x="282.4" y="767.7" font-size="11" fill="#173d1c" text-anchor="middle" textLength="26.1" lengthAdjust="spacingAndGlyphs">18:58</text><text x="433.8" y="767.7" font-size="11" fill="#173d1c" text-anchor="middle" textLength="26.1" lengthAdjust="spacingAndGlyphs">18:59</text><text x="585.1" y="767.7" font-size="11" fill="#173d1c" text-anchor="middle" textLength="26.1" lengthAdjust="spacingAndGlyphs">19:00</text><text x="736.4" y="767.7" font-size="11" fill="#173d1c" text-anchor="middle" textLength="26.1" lengthAdjust="spacingAndGlyphs">19:01</text><text x="887.8" y="767.7" font-size="11" fill="#173d1c" text-anchor="middle" textLength="26.1" lengthAdjust="spacingAndGlyphs">19:02</text><text x="1039.1" y="767.7" font-size="11" fill="#173d1c" text-anchor="middle" textLength="26.1" lengthAdjust="spacingAndGlyphs">19:03</text><text x="1190.4" y="767.7" font-size="11" fill="#173d1c" text-anchor="middle" textLength="26.1" lengthAdjust="spacingAndGlyphs">19:04</text><text x="1341.7" y="767.7" font-size="11" fill="#173d1c" text-anchor="middle" textLength="26.1" lengthAdjust="spacingAndGlyphs">19:05</text><text x="1493.1" y="767.7" font-size="11" fill="#173d1c" text-anchor="middle" textLength="26.1" lengthAdjust="spacingAndGlyphs">19:06</text><text transform="translate(27.4,616.2) rotate(-90)" font-size="11" fill="#444" text-anchor="middle" textLength="60.6" lengthAdjust="spacingAndGlyphs">Latency (ms)</text><text transform="translate(1547.7,623.3) rotate(90)" font-size="11" fill="#c4183a" text-anchor="middle" textLength="67.9" lengthAdjust="spacingAndGlyphs">Packet Loss %</text><text x="766.8" y="452.9" font-size="9.5" fill="#820808" text-anchor="start" textLength="41.0" lengthAdjust="spacingAndGlyphs">Jitter (ms)</text></svg>
</body></html>
